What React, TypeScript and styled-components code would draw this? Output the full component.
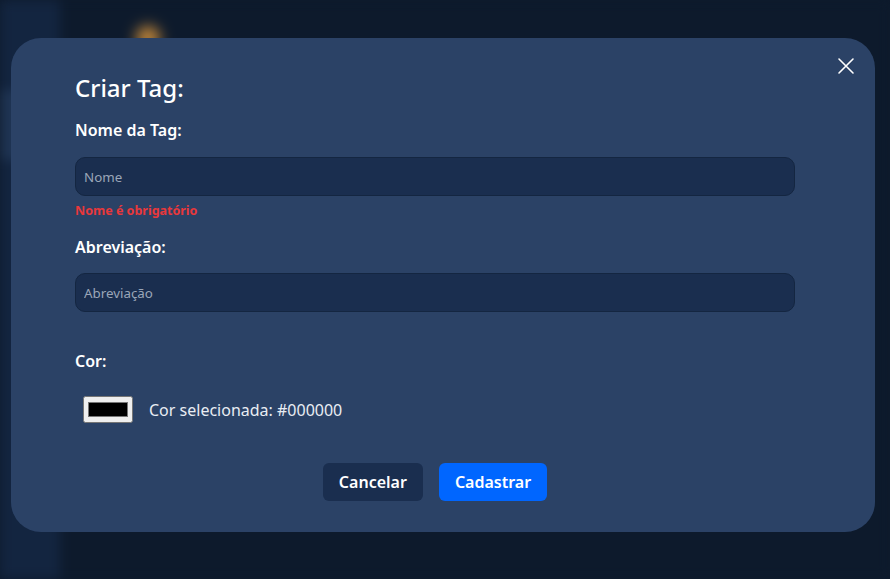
import React from "react";
import styled, { createGlobalStyle } from "styled-components";

const Global = createGlobalStyle`
  html, body { margin: 0; padding: 0; }
  body {
    width: 890px;
    height: 579px;
    overflow: hidden;
    background: #0d1a2c;
    font-family: "Noto Sans", "Open Sans", sans-serif;
  }
  * { box-sizing: border-box; }
`;

const Screen = styled.div`
  position: relative;
  width: 890px;
  height: 579px;
  display: flex;
  background: #0d1a2c;
  overflow: hidden;
`;

const Backdrop = styled.div`
  position: absolute;
  inset: 0;
  display: flex;
  filter: blur(6px);
`;

const Sidebar = styled.div`
  width: 60px;
  height: 100%;
  background: #132540;
  display: flex;
  flex-direction: column;
  padding-top: 90px;
`;

const SideItem = styled.div`
  height: 70px;
  background: #1f3453;
`;

const Main = styled.div`
  flex: 1;
  position: relative;
  background: #0d1a2c;
`;

const Glow = styled.div`
  position: absolute;
  left: 76px;
  top: 26px;
  width: 24px;
  height: 24px;
  border-radius: 50%;
  background: #c78a3a;
  filter: blur(4px);
`;

const Overlay = styled.div`
  position: absolute;
  inset: 0;
  padding: 38px 15px 47px 11px;
  display: flex;
`;

const Modal = styled.div`
  position: relative;
  flex: 1;
  background: #2b4266;
  border-radius: 30px;
  padding: 34px 80px 31px 64px;
  display: flex;
  flex-direction: column;
  color: #ffffff;
`;

const Close = styled.button`
  position: absolute;
  top: 19px;
  right: 20px;
  width: 18px;
  height: 18px;
  padding: 0;
  border: none;
  background: transparent;
  display: flex;
  align-items: center;
  justify-content: center;
`;

const Title = styled.h2`
  margin: 0;
  font-size: 24px;
  line-height: 32px;
  font-weight: 500;
`;

const Label = styled.label<{ $gap: number }>`
  display: block;
  margin-top: ${(p) => p.$gap}px;
  font-size: 16px;
  line-height: 20px;
  font-weight: 600;
`;

const Input = styled.input<{ $gap: number }>`
  margin-top: ${(p) => p.$gap}px;
  width: 720px;
  height: 40px;
  border-radius: 10px;
  border: 1px solid #142641;
  background: #1a2e4f;
  color: #ffffff;
  padding: 0 8px;
  font-family: inherit;
  font-size: 13.33px;
  outline: none;
  &::placeholder { color: #9aa6b8; }
`;

const ErrorText = styled.div`
  margin-top: 7px;
  font-size: 12.5px;
  line-height: 16px;
  font-weight: 700;
  color: #e8383b;
`;

const ColorRow = styled.div`
  margin-top: 25px;
  padding-left: 8px;
  display: flex;
  align-items: center;
  gap: 16px;
  font-size: 16px;
  color: #e9edf3;
`;

const ColorInput = styled.input`
  width: 50px;
  height: 27px;
  margin: 0;
`;

const Actions = styled.div`
  margin-top: 40px;
  display: flex;
  justify-content: center;
  gap: 16px;
`;

const Button = styled.button<{ $primary?: boolean }>`
  height: 38px;
  padding: 0 16px;
  border: none;
  border-radius: 6px;
  background: ${(p) => (p.$primary ? "#0066ff" : "#1a2e4f")};
  color: #ffffff;
  font-family: inherit;
  font-size: 16px;
  font-weight: 600;
`;

export default function App() {
  return (
    <Screen>
      <Global />
      <Backdrop>
        <Sidebar>
          <SideItem />
        </Sidebar>
        <Main>
          <Glow />
        </Main>
      </Backdrop>
      <Overlay>
        <Modal>
          <Close aria-label="Fechar">
            <svg width="18" height="18" viewBox="0 0 18 18">
              <path d="M2 2 L16 16 M16 2 L2 16" stroke="#ffffff" strokeWidth="1.6" strokeLinecap="round" />
            </svg>
          </Close>
          <Title>Criar Tag:</Title>
          <Label $gap={16}>Nome da Tag:</Label>
          <Input $gap={17} placeholder="Nome" />
          <ErrorText>Nome é obrigatório</ErrorText>
          <Label $gap={18}>Abreviação:</Label>
          <Input $gap={16} placeholder="Abreviação" />
          <Label $gap={39}>Cor:</Label>
          <ColorRow>
            <ColorInput type="color" defaultValue="#000000" />
            <span>Cor selecionada: #000000</span>
          </ColorRow>
          <Actions>
            <Button>Cancelar</Button>
            <Button $primary>Cadastrar</Button>
          </Actions>
        </Modal>
      </Overlay>
    </Screen>
  );
}
